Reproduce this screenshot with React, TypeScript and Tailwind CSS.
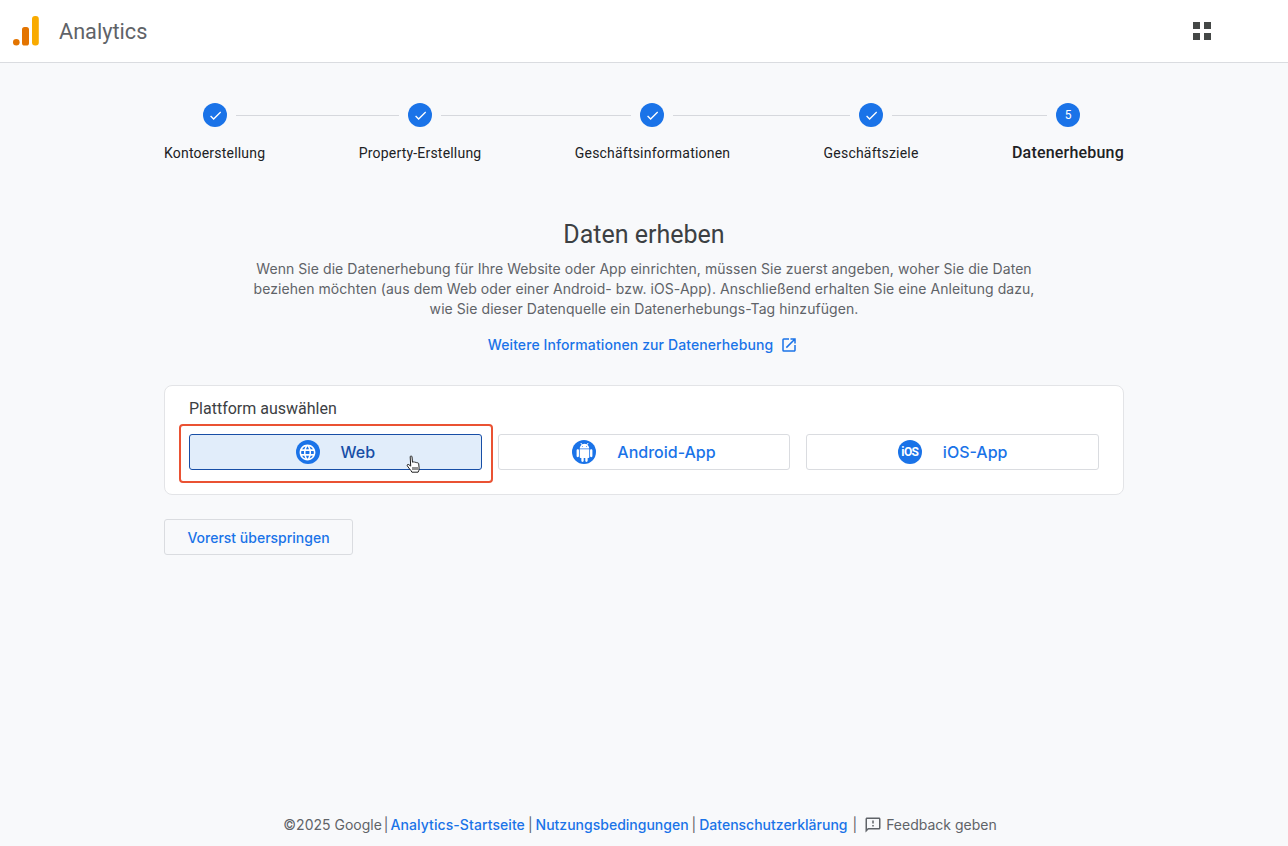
import React from 'react'
import { MdCheck, MdLanguage, MdOpenInNew, MdOutlineFeedback } from 'react-icons/md'

const inter = "font-['Inter','Noto_Sans',sans-serif]"

const StepDone = () => (
  <div className="w-6 h-6 rounded-full bg-[#1a73e8] flex items-center justify-center shrink-0">
    <MdCheck className="text-white w-[15px] h-[15px]" />
  </div>
)

const Line = ({ className }: { className: string }) => <div className={`h-px bg-[#d6d8dd] mx-[9px] ${className}`}></div>

const AndroidIcon = () => (
  <svg viewBox="0 0 24 24" className="w-[19px] h-[21px] mt-px" fill="#fff">
    <path d="M6 18c0 .55.45 1 1 1h1v3.5c0 .83.67 1.5 1.5 1.5s1.5-.67 1.5-1.5V19h2v3.5c0 .83.67 1.5 1.5 1.5s1.5-.67 1.5-1.5V19h1c.55 0 1-.45 1-1V8H6v10zM3.5 8C2.67 8 2 8.67 2 9.5v7c0 .83.67 1.5 1.5 1.5S5 17.33 5 16.5v-7C5 8.67 4.33 8 3.5 8zm17 0c-.83 0-1.5.67-1.5 1.5v7c0 .83.67 1.5 1.5 1.5s1.5-.67 1.5-1.5v-7c0-.83-.67-1.5-1.5-1.5zm-4.97-5.84l1.3-1.3c.2-.2.2-.51 0-.71-.2-.2-.51-.2-.71 0l-1.48 1.48C13.85 1.23 12.95 1 12 1c-.96 0-1.86.23-2.66.63L7.85.15c-.2-.2-.51-.2-.71 0-.2.2-.2.51 0 .71l1.31 1.31C6.97 3.26 6 5.01 6 7h12c0-1.99-.97-3.75-2.47-4.84zM10 5H9V4h1v1zm5 0h-1V4h1v1z" />
  </svg>
)

const HandCursor = () => (
  <svg viewBox="0 0 16 20" className="absolute left-[216px] top-[20px] w-[16px] h-[20px]">
    <path
      d="M4.2 1.8c0-1.1 1.7-1.1 1.8 0l.5 5.4.6-.1c.9-.5 1.6-.2 1.9.4.8-.4 1.5-.2 1.8.4.9-.4 1.7 0 1.9.8l.4 4.2c.1 1.8-.2 3-1 4.3H5.9c-.5-1.2-1.2-2-2.2-3.1L1.4 11c-.8-1.1.4-2.1 1.5-1.3l1.8 1.4z"
      fill="#fff"
      stroke="#222"
      strokeWidth="1"
      strokeLinejoin="round"
    />
    <path d="M7 12v3M9 12v3M11 12v3" stroke="#222" strokeWidth="1" />
  </svg>
)

const App = () => {
  return (
    <div className={`min-h-[846px] h-[846px] bg-[#f8f9fb] flex flex-col overflow-hidden ${inter}`}>
      <header className="h-[63px] shrink-0 bg-white border-b border-[#dadce0] flex items-center">
        <svg viewBox="0 0 26 30" className="ml-[13px] w-[26px] h-[30px] mt-[-1px]">
          <circle cx="3.3" cy="26.3" r="3.3" fill="#e37400" />
          <rect x="9" y="11" width="7" height="18.6" rx="2.6" fill="#e37400" />
          <rect x="19" y="0" width="6.8" height="29.6" rx="3" fill="#f9ab00" />
        </svg>
        <span className="ml-5 w-[88px] text-[21.7px] text-[#5f6368] font-['Roboto',sans-serif] mt-[3px]">Analytics</span>
        <div className="ml-[1046px] grid grid-cols-2 gap-1 mt-[-1px]">
          <div className="w-[7px] h-[7px] bg-[#444746]"></div>
          <div className="w-[7px] h-[7px] bg-[#444746]"></div>
          <div className="w-[7px] h-[7px] bg-[#444746]"></div>
          <div className="w-[7px] h-[7px] bg-[#444746]"></div>
        </div>
      </header>

      <main className="w-[960px] mx-auto flex-1 flex flex-col">
        <div className="mt-10 flex items-center pl-[39px]">
          <StepDone />
          <Line className="w-[163px]" />
          <StepDone />
          <Line className="w-[190px]" />
          <StepDone />
          <Line className="w-[177px]" />
          <StepDone />
          <Line className="w-[155px]" />
          <div className="w-6 h-6 rounded-full bg-[#1a73e8] flex items-center justify-center text-white text-xs font-['Roboto',sans-serif]">5</div>
        </div>
        <div className="mt-[14px] h-6 flex justify-between items-center text-[14px] tracking-[0.2px] text-[#202124] font-['Roboto',sans-serif]">
          <span>Kontoerstellung</span>
          <span>Property-Erstellung</span>
          <span>Geschäftsinformationen</span>
          <span>Geschäftsziele</span>
          <span className="text-[16px] tracking-[0.2px] font-medium">Datenerhebung</span>
        </div>

        <h1 className="mt-[54px] text-center text-[25px] leading-8 text-[#3c4043] font-['Roboto',sans-serif]">Daten erheben</h1>
        <p className="mt-[8px] text-center text-[14px] tracking-[0.06px] leading-5 text-[#5f6368] w-[800px] mx-auto">
          Wenn Sie die Datenerhebung für Ihre Website oder App einrichten, müssen Sie zuerst angeben, woher Sie die Daten
          beziehen möchten (aus dem Web oder einer Android- bzw. iOS-App). Anschließend erhalten Sie eine Anleitung dazu,
          wie Sie dieser Datenquelle ein Datenerhebungs-Tag hinzufügen.
        </p>
        <a className="mt-[16px] pr-[2px] flex items-center justify-center gap-[7px] text-[14px] tracking-[0.1px] leading-5 font-medium text-[#1a73e8]">
          Weitere Informationen zur Datenerhebung
          <MdOpenInNew className="w-[18px] h-[18px]" />
        </a>

        <section className="mt-[30px] h-[110px] bg-white border border-[#e3e4e7] rounded-lg px-6 pt-[13px]">
          <div className="text-[16px] leading-5 text-[#3c4043] font-['Roboto',sans-serif]">Plattform auswählen</div>
          <div className="mt-[15px] grid grid-cols-3 gap-4 w-[910px]">
            <div className="relative h-9 rounded-[3px] bg-[#e1edfa] border border-[#174ea6] flex items-center justify-center gap-[21px] text-[16px] font-medium text-[#174ea6]">
              <div className="w-6 h-6 rounded-full bg-[#1a73e8] flex items-center justify-center">
                <MdLanguage className="text-white w-[19px] h-[19px]" />
              </div>
              <span>Web</span>
              <div className="absolute left-[-11px] right-[-12px] top-[-11px] bottom-[-14px] rounded-[4px] border-2 border-[#ea5233]"></div>
              <HandCursor />
            </div>
            <div className="h-9 rounded-[3px] bg-white border border-[#dadce0] flex items-center justify-center gap-[21px] text-[16px] font-medium text-[#1a73e8]">
              <div className="w-6 h-6 rounded-full bg-[#1a73e8] flex items-center justify-center overflow-hidden">
                <AndroidIcon />
              </div>
              <span>Android-App</span>
            </div>
            <div className="h-9 rounded-[3px] bg-white border border-[#dadce0] flex items-center justify-center gap-[21px] text-[16px] font-medium text-[#1a73e8]">
              <div className="w-6 h-6 rounded-full bg-[#1a73e8] flex items-center justify-center text-white text-[12px] font-bold tracking-[-0.6px] font-['Roboto',sans-serif]">iOS</div>
              <span>iOS-App</span>
            </div>
          </div>
        </section>

        <button className="mt-6 w-[189px] h-9 rounded-[3px] border border-[#dadce0] text-[14px] font-medium text-[#1a73e8]">Vorerst überspringen</button>
      </main>

      <footer className="h-[44px] shrink-0 flex items-start justify-center pt-[13px] pr-[8px] text-[14px] leading-5 text-[#5f6368]">
        <span>©2025 Google</span>
        <span className="mx-[2px]">|</span>
        <a className="font-medium tracking-[0.08px] text-[#1a73e8]">Analytics-Startseite</a>
        <span className="mx-[3px]">|</span>
        <a className="font-medium text-[#1a73e8]">Nutzungsbedingungen</a>
        <span className="mx-[3px]">|</span>
        <a className="font-medium text-[#1a73e8]">Datenschutzerklärung</a>
        <span className="ml-[5px]">|</span>
        <MdOutlineFeedback className="ml-[7px] mr-[4px] w-[18px] h-[18px] mt-px" />
        <span>Feedback geben</span>
      </footer>
    </div>
  )
}

export default App
